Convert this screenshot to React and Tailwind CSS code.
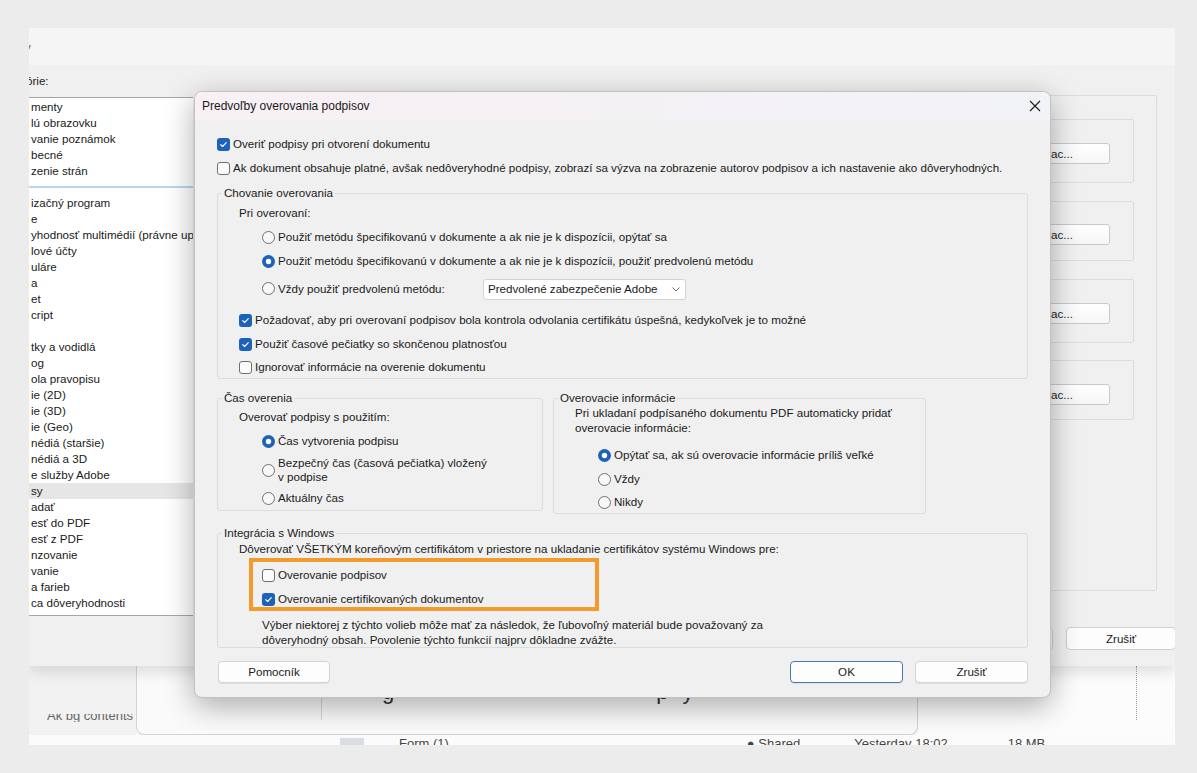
import React from 'react';

function Check({ checked }) {
  if (checked) {
    return (
      <span className="w-[13px] h-[13px] rounded-[3px] bg-[#1c62b9] flex items-center justify-center shrink-0">
        <svg width="9" height="9" viewBox="0 0 9 9">
          <path d="M1.7 4.7 L3.6 6.5 L7.3 2.6" fill="none" stroke="#ffffff" strokeWidth="1.15" strokeLinecap="round" strokeLinejoin="round" />
        </svg>
      </span>
    );
  }
  return <span className="w-[13px] h-[13px] rounded-[3px] bg-[#fbfbfb] border border-[#6f6f6f] shrink-0" />;
}

function Radio({ checked }) {
  return (
    <svg width="13" height="13" viewBox="0 0 13 13" className="shrink-0">
      {checked ? (
        <>
          <circle cx="6.5" cy="6.5" r="6.5" fill="#1c62b9" />
          <circle cx="6.5" cy="6.5" r="2.7" fill="#ffffff" />
        </>
      ) : (
        <circle cx="6.5" cy="6.5" r="6" fill="#f8f8f8" stroke="#6f6f6f" strokeWidth="1" />
      )}
    </svg>
  );
}

function CbRow({ checked, className, children }) {
  return (
    <div className={'flex items-center gap-[3px] whitespace-nowrap ' + className}>
      <Check checked={checked} />
      <span>{children}</span>
    </div>
  );
}

function RadioRow({ checked, className, children }) {
  return (
    <div className={'flex items-center gap-[3px] whitespace-nowrap ' + className}>
      <Radio checked={checked} />
      <span>{children}</span>
    </div>
  );
}

function Legend({ children }) {
  return <legend className="ml-[4px] px-[2px] leading-[14px]">{children}</legend>;
}

const listItems = [
  'menty',
  'lú obrazovku',
  'vanie poznámok',
  'becné',
  'zenie strán',
  '__sep',
  'izačný program',
  'e',
  'yhodnosť multimédií (právne upravené)',
  'lové účty',
  'uláre',
  'a',
  'et',
  'cript',
  '',
  'tky a vodidlá',
  'og',
  'ola pravopisu',
  'ie (2D)',
  'ie (3D)',
  'ie (Geo)',
  'nédiá (staršie)',
  'nédiá a 3D',
  'e služby Adobe',
  '__sel',
  'adať',
  'esť do PDF',
  'esť z PDF',
  'nzovanie',
  'vanie',
  'a farieb',
  'ca dôveryhodnosti',
  'lkladné dokumenty',
];

function BgButton({ children, className }) {
  return (
    <div className={'h-[21px] shrink-0 rounded-[3px] border border-[#c9c9c9] bg-gradient-to-b from-[#ffffff] to-[#f6f6f6] flex items-center ' + className}>
      {children}
    </div>
  );
}

function BackgroundWindow() {
  return (
    <div className="relative z-10 h-[638px] shrink-0 flex flex-col bg-[#f0f0f0] shadow-[0_6px_14px_rgba(0,0,0,0.12)]">
      <div className="h-[37px] shrink-0 bg-[#f5f5f5] flex items-start pt-[10px]">
        <span className="-ml-[4px] text-[#555]">y</span>
      </div>
      <div className="flex-1 flex">
        <div className="w-[164px] shrink-0 flex flex-col">
          <div className="mt-[8px] h-[16px] leading-[16px] -ml-[3px] whitespace-nowrap">órie:</div>
          <div className="mt-[8px] h-[519px] bg-white border-y border-[#a6a6a6] overflow-hidden pt-[1px]">
            {listItems.map((t, i) => {
              if (t === '__sep') {
                return (
                  <div key={i} className="h-[16px] flex items-center">
                    <div className="w-full h-[2px] bg-[#b7d6f2]" />
                  </div>
                );
              }
              if (t === '__sel') {
                return (
                  <div key={i} className="h-[16px] leading-[16px] pl-[2px] bg-[#e6e6e6] whitespace-nowrap">
                    sy
                  </div>
                );
              }
              return (
                <div key={i} className="h-[16px] leading-[16px] pl-[2px] whitespace-nowrap">
                  {t}
                </div>
              );
            })}
          </div>
        </div>
        <div className="flex-1" />
        <div className="w-[135px] shrink-0 flex flex-col">
          <div className="mt-[30px] w-[117px] h-[496px] border border-[#dcdcdc] rounded-[2px] flex flex-col">
            <div className="mt-[23px] w-[93px] h-[64px] border border-[#dcdcdc] rounded-[2px] flex justify-end items-start pt-[23px] pr-[23px]">
              <BgButton className="w-[80px] pl-[20px]">ac...</BgButton>
            </div>
            <div className="mt-[18px] w-[93px] h-[60px] border border-[#dcdcdc] rounded-[2px] flex justify-end items-start pt-[22px] pr-[23px]">
              <BgButton className="w-[80px] pl-[20px]">ac...</BgButton>
            </div>
            <div className="mt-[18px] w-[93px] h-[64px] border border-[#dcdcdc] rounded-[2px] flex justify-end items-start pt-[23px] pr-[23px]">
              <BgButton className="w-[80px] pl-[20px]">ac...</BgButton>
            </div>
            <div className="mt-[17px] w-[93px] h-[60px] border border-[#dcdcdc] rounded-[2px] flex justify-end items-start pt-[23px] pr-[23px]">
              <BgButton className="w-[80px] pl-[20px]">ac...</BgButton>
            </div>
          </div>
          <div className="mt-[36px] flex gap-[13px]">
            <div className="w-[13px] h-[23px] shrink-0 rounded-r-[4px] border border-[#d0d0d0] bg-[#fdfdfd]" />
            <div className="w-[110px] h-[23px] shrink-0 rounded-[4px] border border-[#d0d0d0] bg-[#fdfdfd] flex items-center justify-center">
              Zrušiť
            </div>
          </div>
        </div>
      </div>
    </div>
  );
}

function BottomStrip() {
  return (
    <div className="h-[79px] shrink-0 flex flex-col bg-[#f7f7f7]">
      <div className="h-[69px] shrink-0 flex">
        <div className="w-[107px] shrink-0 bg-[#f2f2f2] flex items-end pb-[13px] pl-[18px]">
          <div className="h-[8px] overflow-hidden flex items-end">
            <span className="text-[13px] leading-[13px] text-[#666] whitespace-nowrap">Ak bg contents</span>
          </div>
        </div>
        <div className="w-[782px] shrink-0 bg-[#fafafa] border border-t-0 border-[#d3d3d3] rounded-b-[8px] flex">
          <div className="w-[185px] shrink-0 h-[54px] border-r border-[#d6d6d6]" />
          <div className="flex-1 flex items-start pt-[14px] text-[22px] leading-[24px] text-[#333] whitespace-nowrap">
            <span className="ml-[60px]">g</span>
            <span className="ml-[262px]">p</span>
            <span className="ml-[14px]">y</span>
          </div>
        </div>
        <div className="flex-1 bg-[#fcfcfc] flex justify-end pr-[38px]">
          <div className="h-[54px] border-r border-dotted border-[#9a9a9a]" />
        </div>
      </div>
      <div className="h-[10px] overflow-hidden flex items-start text-[13px] text-[#444] leading-[18px] bg-[#fbfbfb]">
        <div className="ml-[311px] mt-[3px] w-[24px] h-[7px] bg-[#d9dde3]" />
        <span className="ml-[35px] whitespace-nowrap">Form (1)</span>
        <span className="ml-[298px] whitespace-nowrap">● Shared</span>
        <span className="ml-[54px] whitespace-nowrap">Yesterday 18:02</span>
        <span className="ml-[60px] whitespace-nowrap">18 MB</span>
      </div>
    </div>
  );
}

function Button({ children, className }) {
  return (
    <div className={'h-[22px] rounded-[4px] border bg-[#fdfdfd] flex items-center justify-center shadow-[0_1px_0_rgba(0,0,0,0.06)] ' + className}>
      {children}
    </div>
  );
}

function Dialog() {
  return (
    <div className="absolute left-[194px] top-[91px] w-[857px] h-[607px] z-20 flex flex-col rounded-[8px] border border-[#c2c2c2] bg-[#f0f0f0] shadow-[0_8px_30px_rgba(0,0,0,0.32)] overflow-hidden">
      <div className="h-[28px] shrink-0 flex items-center justify-between pl-[7px] pr-[9px] bg-gradient-to-r from-[#f8f0f4] via-[#f4f1f5] to-[#f2f3f7]">
        <span className="text-[12px] text-[#1a1a1a]">Predvoľby overovania podpisov</span>
        <svg width="12" height="12" viewBox="0 0 12 12">
          <path d="M1 1 L11 11 M11 1 L1 11" stroke="#1a1a1a" strokeWidth="1.1" />
        </svg>
      </div>
      <div className="flex-1 flex flex-col px-[22px] pt-[12px]">
        <CbRow checked className="h-[24px]">Overiť podpisy pri otvorení dokumentu</CbRow>
        <CbRow className="h-[24px]">
          Ak dokument obsahuje platné, avšak nedôveryhodné podpisy, zobrazí sa výzva na zobrazenie autorov podpisov a ich nastavenie ako dôveryhodných.
        </CbRow>

        <fieldset className="mt-[6px] border border-[#dcdcdc] rounded-[3px]">
          <Legend>Chovanie overovania</Legend>
          <div className="flex flex-col">
            <div className="h-[25px] flex items-center pl-[21px]">Pri overovaní:</div>
            <RadioRow className="h-[24px] pl-[44px]">
              Použiť metódu špecifikovanú v dokumente a ak nie je k dispozícii, opýtať sa
            </RadioRow>
            <RadioRow checked className="h-[24px] pl-[44px]">
              Použiť metódu špecifikovanú v dokumente a ak nie je k dispozícii, použiť predvolenú metódu
            </RadioRow>
            <div className="h-[32px] flex items-center pl-[44px]">
              <RadioRow className="w-[221px]">Vždy použiť predvolenú metódu:</RadioRow>
              <div className="w-[203px] h-[21px] bg-white border border-[#d3d3d3] rounded-[3px] flex items-center justify-between pl-[4px] pr-[5px] whitespace-nowrap">
                <span>Predvolené zabezpečenie Adobe</span>
                <svg width="8" height="5" viewBox="0 0 8 5">
                  <path d="M0.5 0.5 L4 4 L7.5 0.5" fill="none" stroke="#6a6a6a" strokeWidth="0.9" />
                </svg>
              </div>
            </div>
            <CbRow checked className="mt-[3px] h-[24px] pl-[21px]">
              Požadovať, aby pri overovaní podpisov bola kontrola odvolania certifikátu úspešná, kedykoľvek je to možné
            </CbRow>
            <CbRow checked className="h-[24px] pl-[21px]">Použiť časové pečiatky so skončenou platnosťou</CbRow>
            <CbRow className="h-[22px] pl-[21px]">Ignorovať informácie na overenie dokumentu</CbRow>
          </div>
        </fieldset>

        <div className="mt-[12px] flex items-start gap-[10px]">
          <fieldset className="w-[326px] shrink-0 border border-[#dcdcdc] rounded-[3px]">
            <Legend>Čas overenia</Legend>
            <div className="flex flex-col">
              <div className="h-[23px] flex items-center pl-[21px]">Overovať podpisy s použitím:</div>
              <RadioRow checked className="h-[26px] pl-[44px]">Čas vytvorenia podpisu</RadioRow>
              <div className="h-[32px] flex items-center gap-[3px] pl-[44px]">
                <Radio />
                <div className="leading-[14.5px]">
                  Bezpečný čas (časová pečiatka) vložený
                  <br />v podpise
                </div>
              </div>
              <RadioRow className="h-[24px] pl-[44px]">Aktuálny čas</RadioRow>
            </div>
          </fieldset>
          <fieldset className="w-[373px] shrink-0 border border-[#dcdcdc] rounded-[3px]">
            <Legend>Overovacie informácie</Legend>
            <div className="flex flex-col">
              <div className="pl-[21px] leading-[15px] whitespace-nowrap">
                Pri ukladaní podpísaného dokumentu PDF automaticky pridať
                <br />
                overovacie informácie:
              </div>
              <RadioRow checked className="mt-[8px] h-[24px] pl-[44px]">
                Opýtať sa, ak sú overovacie informácie príliš veľké
              </RadioRow>
              <RadioRow className="h-[24px] pl-[44px]">Vždy</RadioRow>
              <RadioRow className="h-[22px] pl-[44px]">Nikdy</RadioRow>
            </div>
          </fieldset>
        </div>

        <fieldset className="mt-[12px] border border-[#dcdcdc] rounded-[3px]">
          <Legend>Integrácia s Windows</Legend>
          <div className="flex flex-col">
            <div className="h-[18px] leading-[18px] pl-[21px] whitespace-nowrap">
              Dôverovať VŠETKÝM koreňovým certifikátom v priestore na ukladanie certifikátov systému Windows pre:
            </div>
            <div className="ml-[31px] w-[350px] h-[53px] border-[4px] border-[#f29a2e] flex flex-col pt-[6px] pl-[9px] gap-[10px]">
              <CbRow className="h-[14px]">Overovanie podpisov</CbRow>
              <CbRow checked className="h-[14px]">Overovanie certifikovaných dokumentov</CbRow>
            </div>
            <div className="mt-[6px] pl-[44px] leading-[15px] whitespace-nowrap">
              Výber niektorej z týchto volieb môže mať za následok, že ľubovoľný materiál bude považovaný za
              <br />
              dôveryhodný obsah. Povolenie týchto funkcií najprv dôkladne zvážte.
            </div>
          </div>
        </fieldset>

        <div className="mt-[13px] flex justify-between">
          <Button className="ml-[1px] w-[112px] border-[#d3d3d3]">Pomocník</Button>
          <div className="flex gap-[12px]">
            <Button className="w-[113px] border-[#4678b0]">OK</Button>
            <Button className="w-[113px] border-[#d3d3d3]">Zrušiť</Button>
          </div>
        </div>
      </div>
    </div>
  );
}

export default function App() {
  return (
    <div className="relative w-[1197px] h-[773px] overflow-hidden bg-[#ececec] pt-[28px] pl-[29px] font-['Liberation_Sans',Arial,sans-serif] text-[11.6px] text-[#1a1a1a]">
      <div className="w-[1146px] h-[717px] overflow-hidden flex flex-col bg-[#f0f0f0]">
        <BackgroundWindow />
        <BottomStrip />
      </div>
      <Dialog />
    </div>
  );
}
